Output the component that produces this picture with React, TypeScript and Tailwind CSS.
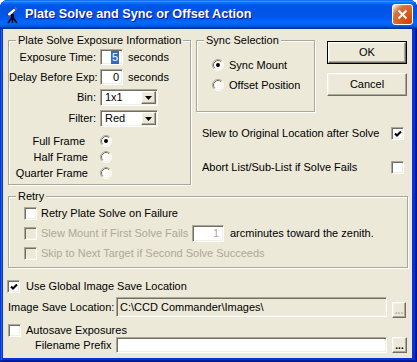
import React from 'react';

const Check = ({ checked = false, disabled = false }: { checked?: boolean; disabled?: boolean }) => (
  <span
    className={`shrink-0 w-[13px] h-[13px] flex items-center justify-center border border-t-[#ACA899] border-l-[#ACA899] border-b-white border-r-white shadow-[inset_1px_1px_0_#716F64,inset_-1px_-1px_0_#F1EFE2] ${
      disabled ? 'bg-[#ECE9D8]' : 'bg-white'
    }`}
  >
    {checked && (
      <svg width="8" height="8" viewBox="0 0 8 8">
        <path d="M1 3.5l2 2 4-4" stroke="#000" strokeWidth="2" fill="none" />
      </svg>
    )}
  </span>
);

const Radio = ({ checked = false }: { checked?: boolean }) => (
  <svg width="12" height="12" viewBox="0 0 12 12" className="shrink-0">
    <circle cx="6" cy="6" r="5" fill="#fff" />
    <path d="M2.11 9.89A5.5 5.5 0 0 1 9.89 2.11" stroke="#ACA899" fill="none" />
    <path d="M9.89 2.11A5.5 5.5 0 0 1 2.11 9.89" stroke="#fff" fill="none" />
    <path d="M2.82 9.18A4.5 4.5 0 0 1 9.18 2.82" stroke="#716F64" fill="none" />
    <path d="M9.18 2.82A4.5 4.5 0 0 1 2.82 9.18" stroke="#F1EFE2" fill="none" />
    {checked && <circle cx="6" cy="6" r="2" fill="#000" />}
  </svg>
);

const Group = ({ label, className, children }: { label: string; className: string; children?: React.ReactNode }) => (
  <fieldset className={`min-w-0 border border-[#ACA899] shadow-[inset_1px_1px_0_#fff,1px_1px_0_#fff] ${className}`}>
    <legend className="ml-[7px] px-[2px] leading-[13px] bg-[#ECE9D8]">{label}</legend>
    {children}
  </fieldset>
);

const sunken =
  'border border-t-[#ACA899] border-l-[#ACA899] border-b-white border-r-white shadow-[inset_1px_1px_0_#716F64,inset_-1px_-1px_0_#F1EFE2]';
const raised =
  'border border-t-white border-l-white border-b-[#716F64] border-r-[#716F64] shadow-[inset_-1px_-1px_0_#ACA899,inset_1px_1px_0_#F1EFE2] bg-[#ECE9D8]';

const Arrow = () => (
  <svg width="7" height="4" viewBox="0 0 7 4">
    <path d="M0 0h7L3.5 4z" fill="#000" />
  </svg>
);

const Combo = ({ value }: { value: string }) => (
  <div className={`w-[58px] h-[17px] p-[1px] flex bg-white ${sunken}`}>
    <span className="flex-1 pl-[3px] flex items-center">{value}</span>
    <span className={`w-[15px] flex items-center justify-center ${raised}`}>
      <Arrow />
    </span>
  </div>
);

export default function App() {
  return (
    <div className="w-[417px] h-[362px] flex flex-col bg-[#0831D9] rounded-t-[8px] overflow-hidden shadow-[inset_-1px_-1px_#00138C,inset_1px_1px_#0831D9,inset_-2px_-2px_#001EA0,inset_2px_2px_#166AEE]">
      {/* title bar */}
      <div className="h-[29px] shrink-0 flex items-center pl-[5px] pr-[4px] bg-[linear-gradient(180deg,#0058EE_0%,#3593FF_4%,#288EFF_6%,#127DFF_8%,#036FFC_10%,#0262EE_14%,#0057E5_20%,#0054E3_24%,#0055EB_56%,#005BF5_66%,#026AFE_76%,#0062EF_86%,#0052D6_92%,#0040AB_94%,#003092_100%)]">
        <svg width="16" height="18" viewBox="0 0 16 18" className="shrink-0">
          <path d="M2 8L9 2l2 2.5-7 6z" fill="#fff" stroke="#1E3C8C" strokeWidth="1" />
          <path d="M9 2l2 2.5 1.5-1.3-2-2.4z" fill="#3A6FD8" />
          <rect x="6" y="8" width="3" height="4" fill="#000" />
          <path d="M7.5 11L3 17M7.5 11v6M7.5 11l4.5 6" stroke="#000" strokeWidth="1.5" />
        </svg>
        <span className="ml-[4px] flex-1 font-['Liberation_Sans',Arial,sans-serif] font-bold text-[12.7px] text-white [text-shadow:1px_1px_#0F1089]">
          Plate Solve and Sync or Offset Action
        </span>
        <span className="w-[21px] h-[21px] rounded-[3px] border border-white flex items-center justify-center bg-[radial-gradient(circle_at_90%_90%,#CC4600_0%,#DC6527_55%,#CD7546_70%,#FFCCB2_90%,#fff_100%)]">
          <svg width="11" height="11" viewBox="0 0 11 11">
            <path d="M1.5 1.5l8 8M9.5 1.5l-8 8" stroke="#fff" strokeWidth="2" />
          </svg>
        </span>
      </div>

      {/* client area */}
      <div className="flex-1 ml-[3px] mr-[5px] mb-[4px] bg-[#ECE9D8] font-['Liberation_Sans',Arial,sans-serif] text-[11px] leading-[13px] text-black whitespace-nowrap">
        <div className="pt-[5px] flex items-start">
          <Group label="Plate Solve Exposure Information" className="ml-[5px] w-[183px] h-[151px]">
            <div className="mt-[2px] h-[16px] flex items-center">
              <span className="w-[87px] text-right">Exposure Time:</span>
              <span className={`ml-[4px] w-[23px] h-[16px] flex items-center justify-end pr-[3px] bg-white ${sunken}`}>
                <span className="bg-[#316AC5] text-white px-[1px]">5</span>
              </span>
              <span className="ml-[5px]">seconds</span>
            </div>
            <div className="mt-[4px] h-[16px] flex items-center">
              <span className="w-[87px] text-right">Delay Before Exp:</span>
              <span className={`ml-[4px] w-[23px] h-[16px] flex items-center justify-end pr-[3px] bg-white ${sunken}`}>0</span>
              <span className="ml-[5px]">seconds</span>
            </div>
            <div className="mt-[4px] h-[17px] flex items-center">
              <span className="w-[87px] text-right">Bin:</span>
              <span className="ml-[4px]">
                <Combo value="1x1" />
              </span>
            </div>
            <div className="mt-[4px] h-[17px] flex items-center">
              <span className="w-[87px] text-right">Filter:</span>
              <span className="ml-[4px]">
                <Combo value="Red" />
              </span>
            </div>
            <div className="mt-[6px] h-[16px] flex items-center">
              <span className="w-[79px] text-right pr-[3px]">Full Frame</span>
              <span className="ml-[12px]">
                <Radio checked />
              </span>
            </div>
            <div className="h-[16px] flex items-center">
              <span className="w-[79px] text-right">Half Frame</span>
              <span className="ml-[12px]">
                <Radio />
              </span>
            </div>
            <div className="h-[16px] flex items-center">
              <span className="w-[79px] text-right">Quarter Frame</span>
              <span className="ml-[12px]">
                <Radio />
              </span>
            </div>
          </Group>

          <div className="ml-[5px] w-[212px] flex flex-col">
            <div className="flex items-start">
              <Group label="Sync Selection" className="w-[119px] h-[78px]">
                <div className="pt-[10px] pl-[15px]">
                  <div className="h-[16px] flex items-center gap-[5px]">
                    <Radio checked />
                    <span>Sync Mount</span>
                  </div>
                  <div className="mt-[4px] h-[16px] flex items-center gap-[5px]">
                    <Radio />
                    <span>Offset Position</span>
                  </div>
                </div>
              </Group>
              <div className="ml-[12px] mt-[7px] flex flex-col">
                <div className="w-[80px] h-[23px] border border-black flex">
                  <button className={`flex-1 flex items-center justify-center ${raised}`}>OK</button>
                </div>
                <button className={`mt-[9px] w-[80px] h-[23px] flex items-center justify-center ${raised}`}>Cancel</button>
              </div>
            </div>
            <div className="mt-[15px] h-[13px] flex items-center justify-between pl-[6px] pr-[4px]">
              <span>Slew to Original Location after Solve</span>
              <Check checked />
            </div>
            <div className="mt-[21px] h-[13px] flex items-center justify-between pl-[6px] pr-[4px]">
              <span>Abort List/Sub-List if Solve Fails</span>
              <Check />
            </div>
          </div>
        </div>

        <Group label="Retry" className="mt-[5px] ml-[5px] w-[400px] h-[78px]">
          <div className="pl-[15px]">
            <div className="h-[20px] flex items-center">
              <Check />
              <span className="ml-[4px]">Retry Plate Solve on Failure</span>
            </div>
            <div className="h-[20px] flex items-center">
              <Check disabled />
              <span className="ml-[4px] w-[151px] text-[#ACA899]">Slew Mount if First Solve Fails</span>
              <span className={`w-[32px] h-[17px] flex items-center justify-end pr-[4px] bg-white text-[#ACA899] ${sunken}`}>1</span>
              <span className="ml-[6px]">arcminutes toward the zenith.</span>
            </div>
            <div className="h-[20px] flex items-center">
              <Check disabled />
              <span className="ml-[4px] text-[#ACA899]">Skip to Next Target if Second Solve Succeeds</span>
            </div>
          </div>
        </Group>

        <div className="mt-[12px] ml-[4px] h-[13px] flex items-center">
          <Check checked />
          <span className="ml-[6px]">Use Global Image Save Location</span>
        </div>
        <div className="mt-[4px] h-[21px] flex items-end">
          <span className="ml-[5px] w-[108px] self-center">Image Save Location:</span>
          <span className={`mb-[1px] w-[271px] h-[20px] flex items-center pl-[3px] bg-[#ECE9D8] ${sunken}`}>
            C:\CCD Commander\Images\
          </span>
          <span className={`ml-[5px] w-[14px] h-[16px] flex items-center justify-center text-[10px] font-bold text-[#ACA899] ${raised}`}>
            ...
          </span>
        </div>
        <div className="mt-[6px] ml-[5px] h-[13px] flex items-center">
          <Check />
          <span className="ml-[5px]">Autosave Exposures</span>
        </div>
        <div className="h-[16px] flex items-center">
          <span className="ml-[32px] w-[81px]">Filename Prefix</span>
          <span className={`w-[271px] h-[16px] bg-white ${sunken}`} />
          <span className={`ml-[5px] w-[15px] h-[16px] flex items-center justify-center text-[10px] font-bold ${raised}`}>
            ...
          </span>
        </div>
      </div>
    </div>
  );
}
